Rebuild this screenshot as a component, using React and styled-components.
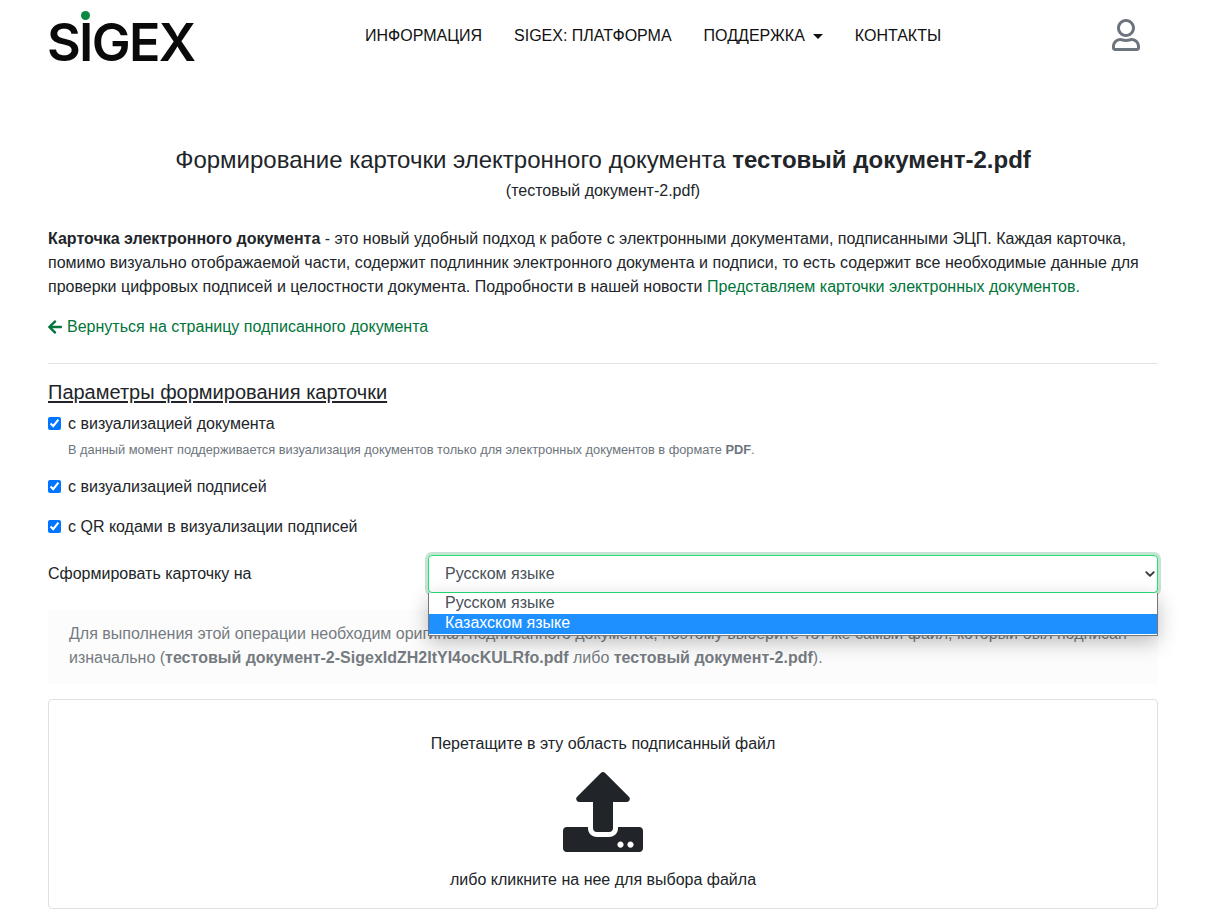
import styled, { createGlobalStyle } from "styled-components";
import { FaArrowLeft, FaRegUser, FaUpload } from "react-icons/fa";

const GlobalStyle = createGlobalStyle`
  * { box-sizing: border-box; }
  body {
    margin: 0;
    background: #fff;
    color: #212529;
    font-family: "Liberation Sans", Arial, sans-serif;
    font-size: 16px;
    line-height: 1.5;
  }
`;

const NAV_ITEMS = ["ИНФОРМАЦИЯ", "SIGEX: ПЛАТФОРМА", "ПОДДЕРЖКА", "КОНТАКТЫ"];

const Page = styled.div`
  width: 1110px;
  margin-left: 48px;
`;

const Header = styled.header`
  display: flex;
  align-items: center;
  height: 70px;
`;

const Logo = styled.a`
  position: relative;
  display: block;
  width: 147px;
  margin-top: 16px;
  margin-left: -1px;
  margin-right: 1px;
  font-family: Inter, sans-serif;
  font-size: 52px;
  font-weight: 600;
  line-height: 70px;
  letter-spacing: -1.7px;
  color: #0a0a0a;
  white-space: nowrap;
`;

const LogoDot = styled.span`
  position: absolute;
  left: 34px;
  top: 3px;
  width: 9px;
  height: 9px;
  border-radius: 50%;
  background: #0a8a43;
`;

const Nav = styled.nav`
  display: flex;
  margin-left: 154px;
  padding-top: 2px;
`;

const NavItem = styled.a`
  display: flex;
  align-items: center;
  padding: 0 16px;
  color: #111;
  white-space: nowrap;
`;

const Caret = styled.span`
  margin-left: 8px;
  border-top: 5px solid #111;
  border-left: 5px solid transparent;
  border-right: 5px solid transparent;
`;

const UserLink = styled.a`
  display: flex;
  margin-left: auto;
  margin-right: 16px;
  color: #6c757d;
  font-size: 32px;
`;

const Title = styled.h4`
  margin: 72px 0 0;
  font-size: 24px;
  font-weight: 400;
  line-height: 36px;
  text-align: center;
`;

const Subtitle = styled.div`
  margin-top: 1px;
  text-align: center;
`;

const Intro = styled.p`
  margin: 24px 0 0;
`;

const GreenLink = styled.a`
  color: #00753a;
`;

const BackLink = styled(GreenLink)`
  display: flex;
  align-items: center;
  gap: 4px;
  margin-top: 16px;

  svg {
    margin-left: -1px;
  }
`;

const Divider = styled.hr`
  margin: 24px 0 16px;
  border: 0;
  border-top: 1px solid #e2e3e4;
`;

const SectionTitle = styled.div`
  font-size: 20px;
  line-height: 24px;
  text-decoration: underline;
  text-underline-offset: 2px;
`;

const CheckRow = styled.label`
  display: flex;
  align-items: center;
  gap: 7px;
  height: 24px;
  margin-top: ${(p) => p.$top}px;
`;

const Check = styled.input`
  width: 13px;
  height: 13px;
  margin: -1px 0 0;
`;

const Hint = styled.div`
  margin: 4px 0 0 20px;
  font-size: 12.8px;
  line-height: 20px;
  color: #6c757d;
`;

const LangRow = styled.div`
  display: grid;
  grid-template-columns: 380px 1fr;
  align-items: center;
  margin-top: 16px;
`;

const SelectWrap = styled.div`
  position: relative;
`;

const LangSelect = styled.select`
  display: block;
  width: 100%;
  height: 38px;
  padding: 0 16px;
  appearance: none;
  background: #fff;
  border: 1.5px solid #25e077;
  border-radius: 4px;
  box-shadow: 0 0 0 3px #c6e4d3;
  outline: 0;
  color: #495057;
  font: inherit;
`;

const Chevron = styled.svg`
  position: absolute;
  top: 15px;
  right: 3px;
  width: 10px;
  height: 8px;
  pointer-events: none;
`;

const Menu = styled.div`
  position: absolute;
  top: 38px;
  left: 0;
  right: 0;
  z-index: 2;
  padding-bottom: 1px;
  background: #fff;
  border: 1px solid #767676;
  border-top-width: 0;
  box-shadow: 0 6px 20px rgba(0, 0, 0, 0.26);
`;

const MenuOption = styled.div`
  height: 20px;
  padding: 0 16px;
  line-height: 18px;
  color: ${(p) => (p.$active ? "#fff" : "#495057")};
  background: ${(p) => (p.$active ? "#1e90ff" : "#fff")};
  &:first-child {
    height: 21px;
    line-height: 19px;
  }
`;

const Note = styled.div`
  margin-top: 17px;
  padding: 12px 21px 14px;
  background: #fcfcfc;
  color: #757b81;
`;

const DropZone = styled.div`
  display: flex;
  flex-direction: column;
  align-items: center;
  height: 210px;
  margin-top: 15px;
  padding-top: 32px;
  background: #fff;
  border: 1px solid #dee2e6;
  border-radius: 4px;
`;

const UploadIcon = styled(FaUpload)`
  margin-top: 16px;
  font-size: 80px;
  color: #212529;
`;

const DropCaption = styled.div`
  margin-top: 16px;
`;

export default function App() {
  return (
    <>
      <GlobalStyle />
      <Page>
        <Header>
          <Logo>
            SIGEX
            <LogoDot />
          </Logo>
          <Nav>
            {NAV_ITEMS.map((item) => (
              <NavItem key={item}>
                {item}
                {item === "ПОДДЕРЖКА" && <Caret />}
              </NavItem>
            ))}
          </Nav>
          <UserLink>
            <FaRegUser />
          </UserLink>
        </Header>

        <Title>
          Формирование карточки электронного документа <b>тестовый документ-2.pdf</b>
        </Title>
        <Subtitle>(тестовый документ-2.pdf)</Subtitle>

        <Intro>
          <b>Карточка электронного документа</b> - это новый удобный подход к работе с
          электронными документами, подписанными ЭЦП. Каждая карточка, помимо визуально
          отображаемой части, содержит подлинник электронного документа и подписи, то есть
          содержит все необходимые данные для проверки цифровых подписей и целостности
          документа. Подробности в нашей новости{" "}
          <GreenLink>Представляем карточки электронных документов.</GreenLink>
        </Intro>

        <BackLink>
          <FaArrowLeft size={16} />
          Вернуться на страницу подписанного документа
        </BackLink>

        <Divider />

        <SectionTitle>Параметры формирования карточки</SectionTitle>
        <CheckRow $top={8}>
          <Check type="checkbox" defaultChecked />с визуализацией документа
        </CheckRow>
        <Hint>
          В данный момент поддерживается визуализация документов только для электронных
          документов в формате <b>PDF</b>.
        </Hint>
        <CheckRow $top={15}>
          <Check type="checkbox" defaultChecked />с визуализацией подписей
        </CheckRow>
        <CheckRow $top={16}>
          <Check type="checkbox" defaultChecked />с QR кодами в визуализации подписей
        </CheckRow>

        <LangRow>
          <span>Сформировать карточку на</span>
          <SelectWrap>
            <LangSelect defaultValue="ru">
              <option value="ru">Русском языке</option>
              <option value="kz">Казахском языке</option>
            </LangSelect>
            <Chevron viewBox="0 0 16 12">
              <path d="M2 3l6 6 6-6" fill="none" stroke="#343a40" strokeWidth="3" strokeLinecap="round" strokeLinejoin="round" />
            </Chevron>
            <Menu>
              <MenuOption>Русском языке</MenuOption>
              <MenuOption $active>Казахском языке</MenuOption>
            </Menu>
          </SelectWrap>
        </LangRow>

        <Note>
          Для выполнения этой операции необходим оригинал подписанного документа, поэтому
          выберите тот же самый файл, который был подписан изначально (
          <b>тестовый документ-2-SigexIdZH2ItYI4ocKULRfo.pdf</b> либо{" "}
          <b>тестовый документ-2.pdf</b>).
        </Note>

        <DropZone>
          <div>Перетащите в эту область подписанный файл</div>
          <UploadIcon />
          <DropCaption>либо кликните на нее для выбора файла</DropCaption>
        </DropZone>
      </Page>
    </>
  );
}
